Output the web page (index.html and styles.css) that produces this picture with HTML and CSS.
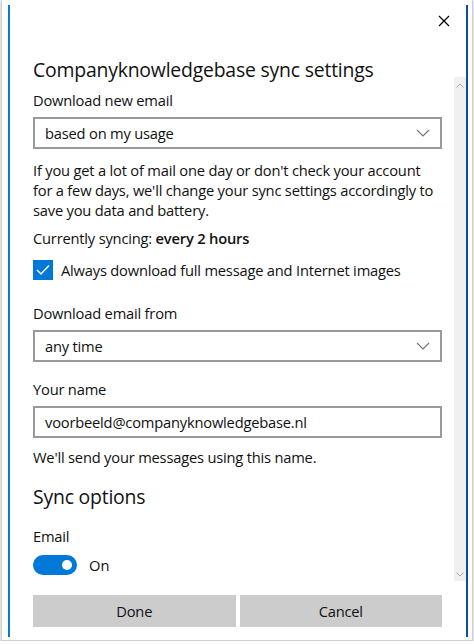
FILE: index.html
```html
<!DOCTYPE html>
<html lang="en">
<head>
  <meta charset="UTF-8">
  <title>Sync settings</title>
  <meta name="viewport" content="width=device-width, initial-scale=1.0">
  <link rel="stylesheet" href="styles.css">
</head>
<body>
  <div class="venster">
    <div class="paneel">
      <div class="kop">
        <button class="sluiten" aria-label="Close">
          <svg width="12" height="12" viewBox="0 0 12 12"><path d="M1 1L11 11M11 1L1 11" stroke="#000" stroke-width="1.2" fill="none"/></svg>
        </button>
        <h1>Companyknowledgebase sync settings</h1>
      </div>
      <div class="scroll">
        <div class="inhoud">
          <label class="label">Download new email</label>
          <div class="keuze">
            <span>based on my usage</span>
            <svg width="14" height="8" viewBox="0 0 14 8"><path d="M1 1L7 7L13 1" stroke="#777" stroke-width="1.2" fill="none"/></svg>
          </div>
          <p class="uitleg">If you get a lot of mail one day or don't check your account for a few days, we'll change your sync settings accordingly to save you data and battery.</p>
          <p class="status">Currently syncing: <strong>every 2 hours</strong></p>
          <div class="vinkje">
            <span class="vak">
              <svg width="14" height="12" viewBox="0 0 14 12"><path d="M1 6L5 10L13 1.5" stroke="#fff" stroke-width="1.5" fill="none"/></svg>
            </span>
            <span>Always download full message and Internet images</span>
          </div>
          <label class="label">Download email from</label>
          <div class="keuze">
            <span>any time</span>
            <svg width="14" height="8" viewBox="0 0 14 8"><path d="M1 1L7 7L13 1" stroke="#777" stroke-width="1.2" fill="none"/></svg>
          </div>
          <label class="label">Your name</label>
          <div class="veld">voorbeeld@companyknowledgebase.nl</div>
          <p class="hint">We'll send your messages using this name.</p>
          <h2>Sync options</h2>
          <label class="label">Email</label>
          <div class="schakel">
            <span class="knop"><span class="bol"></span></span>
            <span>On</span>
          </div>
        </div>
        <div class="scrollbalk">
          <svg width="8" height="5" viewBox="0 0 8 5"><path d="M0.5 4.5L4 1L7.5 4.5" stroke="#aaa" fill="none"/></svg>
          <svg width="8" height="5" viewBox="0 0 8 5"><path d="M0.5 0.5L4 4L7.5 0.5" stroke="#aaa" fill="none"/></svg>
        </div>
      </div>
      <div class="voet">
        <button class="btn">Done</button>
        <button class="btn">Cancel</button>
      </div>
    </div>
  </div>
</body>
</html>
```

FILE: styles.css
```css
* {
  box-sizing: border-box;
}
body {
  margin: 0;
  font-family: 'Open Sans', 'Noto Sans', sans-serif;
  color: #111;
  background: #fff;
}
.venster {
  width: 472px;
  height: 641px;
  margin-left: 1px;
  border: 1px solid #d0d0d0;
  border-top: none;
  box-shadow: 0 1px 2px rgba(0,0,0,0.35);
  padding: 5px 4px 3px 6px;
  background: #fff;
}
.paneel {
  height: 100%;
  border-left: 2px solid #0a78d4;
  border-right: 2px solid #0d4f94;
  display: flex;
  flex-direction: column;
}
.kop {
  padding: 0 0 0 23px;
}
.sluiten {
  display: block;
  margin: 10px 16px 0 auto;
  width: 12px;
  height: 12px;
  padding: 0;
  border: none;
  background: none;
}
.sluiten svg {
  display: block;
}
h1 {
  font-size: 19.4px;
  font-weight: 400;
  margin: 30px 0 0;
  line-height: 26px;
  letter-spacing: -0.2px;
}
.scroll {
  flex: 1;
  display: flex;
  min-height: 0;
}
.inhoud {
  flex: 1;
  padding: 7px 12px 0 23px;
  overflow: hidden;
}
.scrollbalk {
  width: 12px;
  margin-top: -6px;
  margin-bottom: 14px;
  background: #f0f0f0;
  display: flex;
  flex-direction: column;
  justify-content: space-between;
  align-items: center;
  padding: 6px 0 4px;
}
.label {
  display: block;
  font-size: 14.7px;
  line-height: 20px;
  letter-spacing: -0.2px;
}
.keuze, .veld {
  height: 32px;
  border: 2px solid #999;
  margin-top: 7px;
  display: flex;
  align-items: center;
  justify-content: space-between;
  padding: 0 10px 0 10px;
  font-size: 14.7px;
  letter-spacing: -0.2px;
}
.uitleg {
  font-size: 14.7px;
  line-height: 20px;
  margin: 11px 0 0;
  letter-spacing: -0.2px;
}
.status {
  font-size: 14.7px;
  line-height: 20px;
  margin: 8px 0 0;
  letter-spacing: -0.2px;
}
.status strong {
  font-weight: 600;
}
.vinkje {
  display: flex;
  align-items: center;
  gap: 8px;
  margin: 12px 0 23px;
  font-size: 14.7px;
  letter-spacing: -0.2px;
}
.vak {
  width: 20px;
  height: 20px;
  background: #0078d7;
  display: flex;
  align-items: center;
  justify-content: center;
}
.veld {
  justify-content: flex-start;
}
.hint {
  font-size: 14.7px;
  line-height: 20px;
  margin: 9px 0 0;
  letter-spacing: -0.2px;
}
.keuze + .label {
  margin-top: 17px;
}
h2 {
  font-size: 19.4px;
  font-weight: 400;
  margin: 17px 0 0;
  line-height: 26px;
  letter-spacing: -0.2px;
}
h2 + .label {
  margin-top: 16px;
}
.schakel {
  display: flex;
  align-items: center;
  gap: 12px;
  margin-top: 9px;
  font-size: 14.7px;
}
.knop {
  width: 44px;
  height: 20px;
  border-radius: 10px;
  background: #0078d7;
  position: relative;
}
.bol {
  position: absolute;
  right: 5px;
  top: 5px;
  width: 10px;
  height: 10px;
  border-radius: 50%;
  background: #fff;
}
.voet {
  display: flex;
  gap: 4px;
  padding: 0 24px 10px 23px;
}
.btn {
  flex: 1;
  height: 32px;
  border: none;
  background: #cccccc;
  font-family: inherit;
  font-size: 14.7px;
  color: #111;
  letter-spacing: -0.2px;
}
```
